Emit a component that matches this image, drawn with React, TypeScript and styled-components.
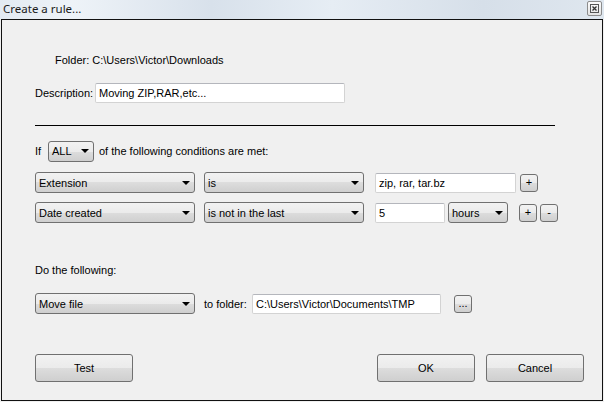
import React from "react";
import styled, {createGlobalStyle} from "styled-components";

const Global = createGlobalStyle`
  html, body {
    margin: 0;
    padding: 0;
    background: #f0f0f0;
  }
  * {
    box-sizing: border-box;
  }
`;

const Window = styled.div`
  width: 604px;
  height: 402px;
  display: flex;
  flex-direction: column;
  background: #f0f0f0;
  font-family: "Liberation Sans", Arial, sans-serif;
  font-size: 11px;
  color: #000;
`;

const TitleBar = styled.div`
  height: 19px;
  display: flex;
  align-items: flex-start;
  justify-content: space-between;
  padding: 1px 2px 0 3px;
  background: linear-gradient(to right, #e3eaf2 0%, #eef3f8 12%, #d8e1eb 35%, #e6edf4 55%, #d6dfe9 80%, #dfe7ef 100%);
`;

const Title = styled.span`
  font-family: "Noto Sans", "Open Sans", sans-serif;
  font-size: 11.5px;
  line-height: 16px;
  color: #1b1b1b;
`;

const CloseBtn = styled.div`
  width: 15px;
  height: 15px;
  border: 1px solid #8c8c8c;
  border-radius: 2px;
  background: linear-gradient(#fbfbfb, #e4e4e4);
  display: flex;
  align-items: center;
  justify-content: center;
`;

const Panel = styled.div`
  flex: 1;
  margin: 0 1px 1px 1px;
  border: 1px solid #111;
  display: flex;
  flex-direction: column;
  padding: 0 18px 0 33px;
`;

const Row = styled.div<{$top: number; $h: number; $indent?: number}>`
  display: flex;
  align-items: center;
  margin-top: ${p => p.$top}px;
  height: ${p => p.$h}px;
  padding-left: ${p => p.$indent ?? 0}px;
`;

const Label = styled.span<{$w?: number; $gap?: number}>`
  white-space: nowrap;
  margin-left: ${p => p.$gap ?? 0}px;
  ${p => (p.$w ? `width: ${p.$w}px;` : "")}
`;

const Separator = styled.div`
  margin-top: 22px;
  width: 520px;
  height: 1px;
  background: #000;
`;

const Field = styled.div<{$w: number; $gap?: number}>`
  width: ${p => p.$w}px;
  height: 20px;
  margin-left: ${p => p.$gap ?? 0}px;
  background: #fff;
  border: 1px solid #d3d3d3;
  border-top-color: #b4b6bc;
  border-radius: 2px;
  padding: 0 3px;
  display: flex;
  align-items: center;
  white-space: nowrap;
  overflow: hidden;
`;

const Combo = styled.div<{$w: number; $gap?: number}>`
  width: ${p => p.$w}px;
  height: 21px;
  margin-left: ${p => p.$gap ?? 0}px;
  border: 1px solid #707070;
  border-radius: 3px;
  background: linear-gradient(#f2f2f2 0%, #ebebeb 50%, #dddddd 50%, #cfcfcf 100%);
  display: flex;
  align-items: center;
  justify-content: space-between;
  padding: 0 4px 0 3px;
  white-space: nowrap;
`;

const Arrow = styled.span`
  width: 0;
  height: 0;
  border-left: 4px solid transparent;
  border-right: 4px solid transparent;
  border-top: 4px solid #000;
`;

const SmallBtn = styled.div<{$gap?: number}>`
  width: 18px;
  height: 18px;
  margin-left: ${p => p.$gap ?? 0}px;
  border: 1px solid #707070;
  border-radius: 3px;
  background: linear-gradient(#f2f2f2 0%, #ebebeb 50%, #dddddd 50%, #cfcfcf 100%);
  display: flex;
  align-items: center;
  justify-content: center;
  line-height: 1;
`;

const ButtonRow = styled.div`
  margin-top: 40px;
  height: 28px;
  display: flex;
  justify-content: space-between;
`;

const ButtonGroup = styled.div`
  display: flex;
  gap: 11px;
`;

const Button = styled.div`
  width: 98px;
  height: 28px;
  border: 1px solid #707070;
  border-radius: 3px;
  background: linear-gradient(#f2f2f2 0%, #ebebeb 50%, #dddddd 50%, #cfcfcf 100%);
  display: flex;
  align-items: center;
  justify-content: center;
`;

const Select = ({w, gap, children}: {w: number; gap?: number; children: React.ReactNode}) => (
    <Combo $w={w} $gap={gap}>
        <span>{children}</span>
        <Arrow/>
    </Combo>
);

const App = () => {
    return (
        <>
            <Global/>
            <Window>
                <TitleBar>
                    <Title>Create a rule...</Title>
                    <CloseBtn>
                        <svg width="9" height="9" viewBox="0 0 9 9">
                            <rect x="0.5" y="0.5" width="8" height="8" fill="none" stroke="#555"/>
                            <path d="M2.5 2.5 L6.5 6.5 M6.5 2.5 L2.5 6.5" stroke="#333" strokeWidth="1.3"/>
                        </svg>
                    </CloseBtn>
                </TitleBar>
                <Panel>
                    <Row $top={30} $h={20} $indent={20}>
                        <Label>Folder: C:\Users\Victor\Downloads</Label>
                    </Row>
                    <Row $top={13} $h={20}>
                        <Label $w={60}>Description:</Label>
                        <Field $w={250}>Moving ZIP,RAR,etc...</Field>
                    </Row>
                    <Separator/>
                    <Row $top={14} $h={22}>
                        <Label $w={13}>If</Label>
                        <Select w={46}>ALL</Select>
                        <Label $gap={5}>of the following conditions are met:</Label>
                    </Row>
                    <Row $top={10} $h={21}>
                        <Select w={160}>Extension</Select>
                        <Select w={160} gap={9}>is</Select>
                        <Field $w={141} $gap={11}>zip, rar, tar.bz</Field>
                        <SmallBtn $gap={4}>+</SmallBtn>
                    </Row>
                    <Row $top={9} $h={21}>
                        <Select w={160}>Date created</Select>
                        <Select w={160} gap={9}>is not in the last</Select>
                        <Field $w={70} $gap={11}>5</Field>
                        <Select w={60} gap={3}>hours</Select>
                        <SmallBtn $gap={11}>+</SmallBtn>
                        <SmallBtn $gap={3}>-</SmallBtn>
                    </Row>
                    <Row $top={38} $h={18}>
                        <Label>Do the following:</Label>
                    </Row>
                    <Row $top={14} $h={21}>
                        <Select w={160}>Move file</Select>
                        <Label $gap={9} $w={48}>to folder:</Label>
                        <Field $w={189}>C:\Users\Victor\Documents\TMP</Field>
                        <SmallBtn $gap={13}>...</SmallBtn>
                    </Row>
                    <ButtonRow>
                        <Button>Test</Button>
                        <ButtonGroup>
                            <Button>OK</Button>
                            <Button>Cancel</Button>
                        </ButtonGroup>
                    </ButtonRow>
                </Panel>
            </Window>
        </>
    );
};

export default App;
